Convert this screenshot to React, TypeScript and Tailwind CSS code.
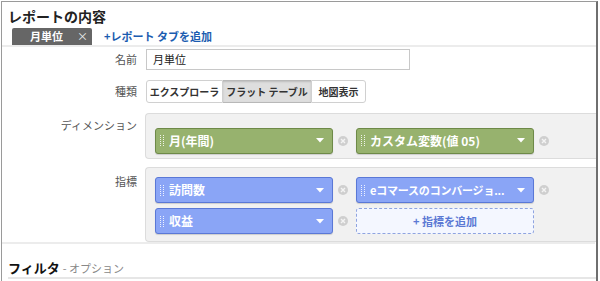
import React from "react";

const JP = { fontFamily: '"Noto Sans CJK JP", "Noto Sans", sans-serif' };

function Grip() {
  return (
    <svg width="5" height="11" viewBox="0 0 5 11" className="shrink-0">
      {[0, 1, 2, 3, 4, 5].map((r) =>
        [0, 1].map((c) => (
          <rect key={`${r}-${c}`} x={c * 3} y={r * 2} width="1" height="1" fill="rgba(255,255,255,0.85)" />
        ))
      )}
    </svg>
  );
}

function Caret() {
  return (
    <svg width="8" height="5" viewBox="0 0 8 5" className="shrink-0">
      <path d="M0 0 L8 0 L4 4.5 Z" fill="#fff" />
    </svg>
  );
}

function CloseDot() {
  return (
    <svg width="10" height="10" viewBox="0 0 10 10" className="shrink-0">
      <circle cx="5" cy="5" r="5" fill="#cfcfcf" />
      <path d="M3 3 L7 7 M7 3 L3 7" stroke="#f4f4f4" strokeWidth="1.4" />
    </svg>
  );
}

function Chip({ label, color, small = false }: { label: string; color: "green" | "blue"; small?: boolean }) {
  const cls =
    color === "green"
      ? "bg-[#97b26e] border-[#6e8a48]"
      : "bg-[#8aa5f6] border-[#5a78d6]";
  return (
    <div className="flex items-center gap-[5px]">
      <div
        className={`w-[178px] h-[26px] rounded-[3px] border ${cls} flex items-center pl-[4px] pr-[8px] text-white font-bold ${small ? "text-[11px] tracking-[-0.2px]" : "text-[12px]"} shadow-[0_1px_1px_rgba(0,0,0,0.15)]`}
      >
        <Grip />
        <span className="ml-[4px] flex-1 whitespace-nowrap overflow-hidden">{label}</span>
        <Caret />
      </div>
      <CloseDot />
    </div>
  );
}

function Label({ children, className = "" }: { children: React.ReactNode; className?: string }) {
  return (
    <div className={`w-[135px] shrink-0 text-right text-[11px] text-[#555] ${className}`}>{children}</div>
  );
}

export default function App() {
  return (
    <div className="w-[600px] h-[281px] overflow-hidden bg-white" style={JP}>
      <div className="ml-[1px] mt-[1px] w-[597px] h-[300px] border-l border-t border-[#9a9a9a] border-r-2 border-r-[#6f6f6f]">
        <div className="pl-[6px] pt-[4px] h-[26px] text-[14px] font-bold text-[#222] leading-[20px]">
          レポートの内容
        </div>
        <div className="flex items-end h-[19px] border-b-2 border-[#ececec] pl-[10px]">
          <div className="w-[80px] h-[17px] bg-[#666] rounded-t-[2px] flex items-center text-white text-[11px] font-bold">
            <span className="ml-[18px]">月単位</span>
            <span className="ml-[14px] text-[11px] font-normal text-[#eee]">×</span>
          </div>
          <div className="ml-[12px] h-[17px] text-[11px] font-bold text-[#1b5cb0] leading-[17px]">
            +レポート タブを追加
          </div>
        </div>
        <div className="flex items-center mt-[2px] h-[21px]">
          <Label>名前</Label>
          <div className="ml-[9px] w-[264px] h-[21px] border border-[#c8c8c8] text-[11px] text-[#222] pl-[6px] leading-[19px]">
            月単位
          </div>
        </div>
        <div className="flex items-center mt-[10px] h-[23px]">
          <Label>種類</Label>
          <div className="ml-[9px] flex h-[23px] text-[10px] font-bold text-[#333]">
            <div className="w-[77px] border border-[#d0d0d0] rounded-l-[3px] bg-white flex items-center justify-center">
              エクスプローラ
            </div>
            <div className="w-[88px] border-y border-[#b8b8b8] bg-[#dedede] shadow-[inset_0_1px_2px_rgba(0,0,0,0.15)] flex items-center justify-center">
              フラット テーブル
            </div>
            <div className="w-[55px] border border-[#d0d0d0] rounded-r-[3px] bg-white flex items-center justify-center">
              地図表示
            </div>
          </div>
        </div>
        <div className="flex items-start mt-[10px]">
          <Label className="pt-[4px]">ディメンション</Label>
          <div className="ml-[8px] flex-1 h-[46px] bg-[#f1f1f1] border border-r-0 border-[#dcdcdc] rounded-l-[4px] pl-[9px] pt-[9px] flex gap-[8px]">
            <Chip label="月(年間)" color="green" />
            <Chip label="カスタム変数(値 05)" color="green" />
          </div>
        </div>
        <div className="flex items-start mt-[8px]">
          <Label className="pt-[6px]">指標</Label>
          <div className="ml-[8px] flex-1 h-[75px] bg-[#f1f1f1] border border-r-0 border-[#dcdcdc] rounded-l-[4px] pl-[9px] pt-[9px] flex flex-col gap-[5px]">
            <div className="flex gap-[8px]">
              <Chip label="訪問数" color="blue" />
              <Chip label="eコマースのコンバージョ..." color="blue" small />
            </div>
            <div className="flex gap-[8px]">
              <Chip label="収益" color="blue" />
              <div className="w-[178px] h-[26px] rounded-[3px] border border-dashed border-[#8fa4e0] bg-[#f4f7ff] flex items-center justify-center text-[11px] font-bold text-[#5b79d4]">
                + 指標を追加
              </div>
            </div>
          </div>
        </div>
        <div className="h-[2px] bg-[#ececec] mr-[1px]" />
        <div className="pl-[6px] mt-[14px] h-[18px] flex items-baseline">
          <span className="text-[13px] font-bold text-[#111]">フィルタ</span>
          <span className="ml-[3px] text-[11px] text-[#888]">- オプション</span>
        </div>
        <div className="ml-[6px] mt-[1px] h-[2px] bg-[#e6e6e6]" />
      </div>
    </div>
  );
}
